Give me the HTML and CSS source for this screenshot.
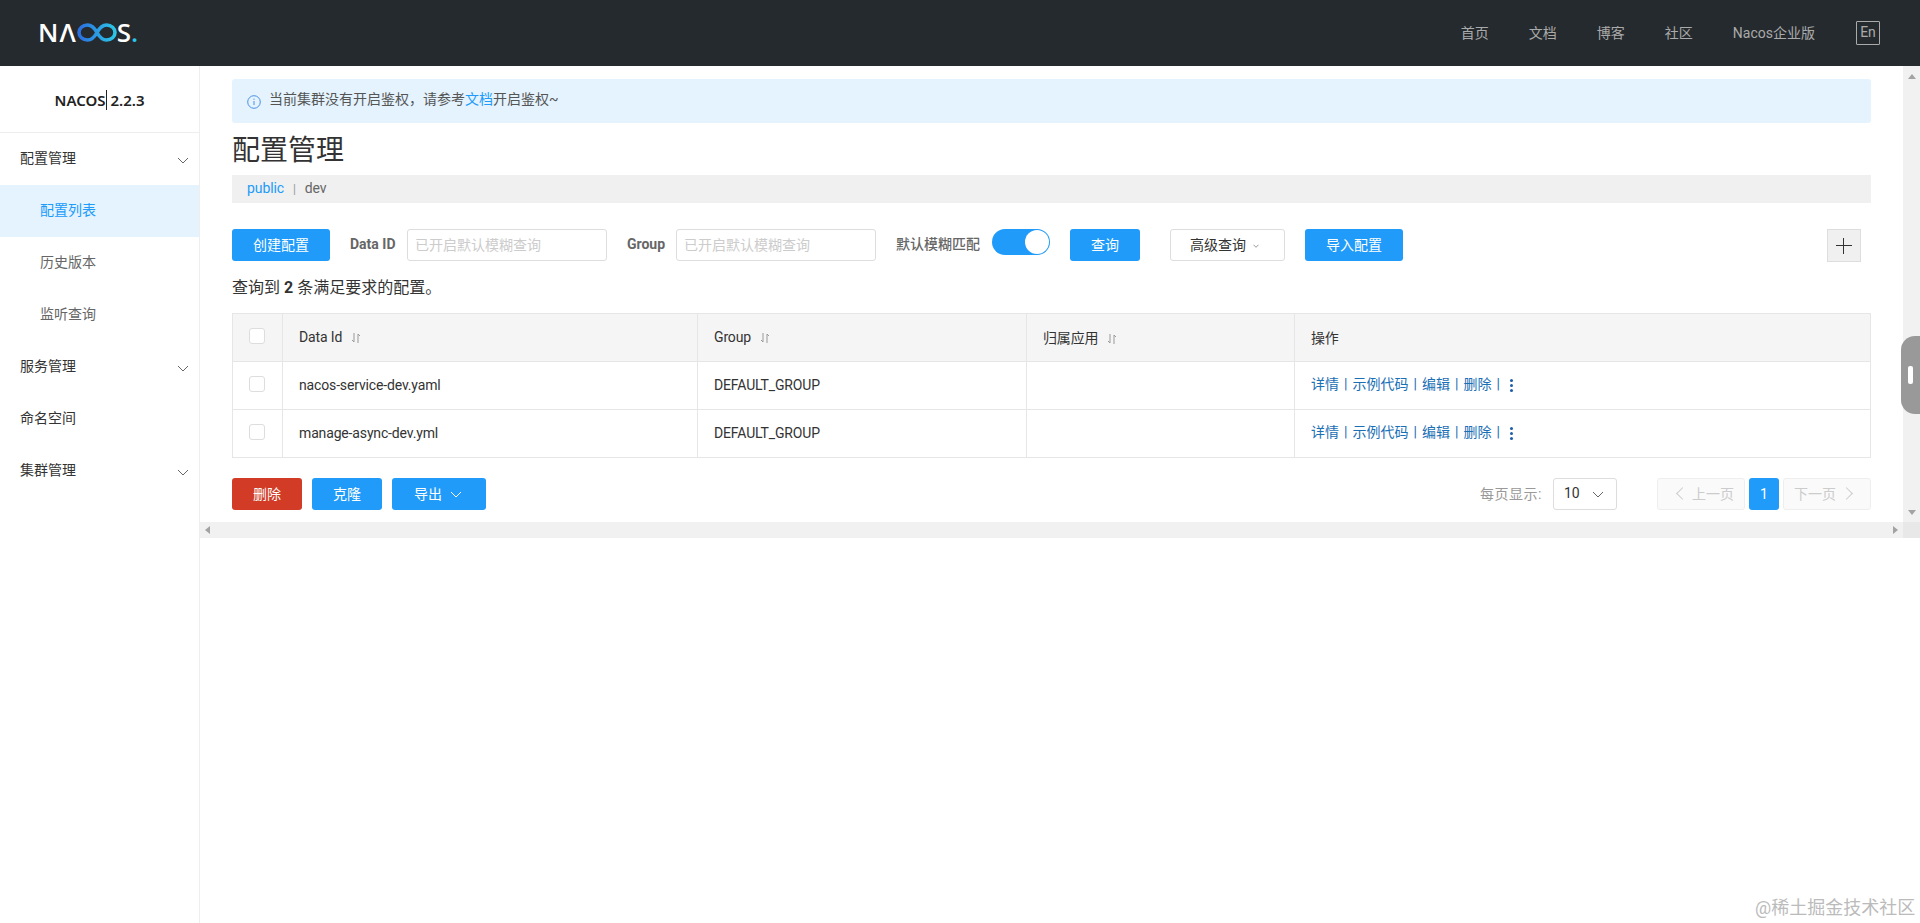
FILE: index.html
```html
<!DOCTYPE html>
<html lang="zh-CN">
<head>
    <meta charset="UTF-8">
    <title>Nacos</title>
    <link rel="stylesheet" href="styles.css">
</head>
<body>

<svg class="defs" width="0" height="0">
    <defs>
        <symbol id="chev" viewBox="0 0 12 7">
            <path d="M1 1l5 5 5-5" fill="none" stroke="currentColor" stroke-width="1"/>
        </symbol>
        <symbol id="sort" viewBox="0 0 8 10">
            <path d="M2 0v9M2 9L0 7M6 10V1M6 1l2 2" fill="none" stroke="#999" stroke-width="1"/>
        </symbol>
        <linearGradient id="logoGrad" x1="0" y1="0" x2="1" y2="0">
            <stop offset="0" stop-color="#2b6fe0"/>
            <stop offset="1" stop-color="#2cc6e6"/>
        </linearGradient>
    </defs>
</svg>

<header class="topbar">
    <div class="logo">
        <span class="logo-n">N</span><span class="logo-a">Λ</span>
        <svg class="logo-mark" width="40" height="19" viewBox="0 0 40 19">
            <path d="M20 9.500C17.500 5 14.500 2 10.500 2 5.500 2 2 5.500 2 9.500S5.500 17 10.500 17c4 0 7-3 9.500-7.500S25.500 2 29.500 2c5 0 8.500 3.500 8.500 7.500S34.500 17 29.500 17c-4 0-7-3-9.500-7.500z" fill="none" stroke="url(#logoGrad)" stroke-width="3.600"/>
        </svg>
        <span>S</span><span class="logo-dot">.</span>
    </div>
    <nav class="topnav">
        <a>首页</a>
        <a>文档</a>
        <a>博客</a>
        <a>社区</a>
        <a>Nacos企业版</a>
        <span class="lang">En</span>
    </nav>
</header>

<div class="layout">
    <aside class="sidebar">
        <div class="version"><span class="version-name">NACOS</span> 2.2.3</div>
        <div class="menu-group">配置管理<svg class="chev"><use href="#chev"/></svg></div>
        <div class="menu-item active">配置列表</div>
        <div class="menu-item">历史版本</div>
        <div class="menu-item">监听查询</div>
        <div class="menu-group">服务管理<svg class="chev"><use href="#chev"/></svg></div>
        <div class="menu-group">命名空间</div>
        <div class="menu-group">集群管理<svg class="chev"><use href="#chev"/></svg></div>
    </aside>

    <div class="right">
        <div class="pane">
            <main class="content">
                <div class="notice">
                    <svg class="notice-icon" width="14" height="14" viewBox="0 0 14 14">
                        <circle cx="7" cy="7" r="6.300" fill="none" stroke="#4a90e2" stroke-width="1"/>
                        <path d="M7 6v4M7 3.600v1.200" stroke="#4a90e2" stroke-width="1"/>
                    </svg>
                    <span>当前集群没有开启鉴权，请参考<a class="blue">文档</a>开启鉴权~</span>
                </div>
                <h1>配置管理</h1>
                <div class="crumbs"><a class="blue">public</a><i>|</i><span>dev</span></div>

                <div class="toolbar">
                    <button class="btn w98">创建配置</button>
                    <label class="lbl lbl-id">Data ID</label>
                    <input class="field" placeholder="已开启默认模糊查询">
                    <label class="lbl lbl-group">Group</label>
                    <input class="field" placeholder="已开启默认模糊查询">
                    <label class="lbl lbl-fuzzy">默认模糊匹配</label>
                    <span class="switch"><span class="knob"></span></span>
                    <button class="btn w70 gap20">查询</button>
                    <button class="btn-plain gap30">高级查询<svg class="chev-small"><use href="#chev"/></svg></button>
                    <button class="btn w98 gap20">导入配置</button>
                    <button class="plus"></button>
                </div>

                <p class="summary">查询到 <strong>2</strong> 条满足要求的配置。</p>

                <table class="grid">
                    <colgroup>
                        <col class="c-check"><col class="c-id"><col class="c-group"><col class="c-app"><col>
                    </colgroup>
                    <thead>
                        <tr>
                            <th class="check"><span class="box"></span></th>
                            <th>Data Id<svg class="sort"><use href="#sort"/></svg></th>
                            <th>Group<svg class="sort"><use href="#sort"/></svg></th>
                            <th>归属应用<svg class="sort"><use href="#sort"/></svg></th>
                            <th>操作</th>
                        </tr>
                    </thead>
                    <tbody>
                        <tr>
                            <td class="check"><span class="box"></span></td>
                            <td>nacos-service-dev.yaml</td>
                            <td>DEFAULT_GROUP</td>
                            <td></td>
                            <td class="ops"><a>详情</a><i>|</i><a>示例代码</a><i>|</i><a>编辑</a><i>|</i><a>删除</a><i>|</i><b class="dots"></b></td>
                        </tr>
                        <tr>
                            <td class="check"><span class="box"></span></td>
                            <td>manage-async-dev.yml</td>
                            <td>DEFAULT_GROUP</td>
                            <td></td>
                            <td class="ops"><a>详情</a><i>|</i><a>示例代码</a><i>|</i><a>编辑</a><i>|</i><a>删除</a><i>|</i><b class="dots"></b></td>
                        </tr>
                    </tbody>
                </table>

                <div class="footer-row">
                    <button class="btn red w70">删除</button>
                    <button class="btn w70 gap10">克隆</button>
                    <button class="btn w94 gap10 export">导出<svg class="chev-btn"><use href="#chev"/></svg></button>
                    <div class="pager">
                        <span class="page-label">每页显示:</span>
                        <span class="page-size">10<svg class="chev"><use href="#chev"/></svg></span>
                        <span class="page-btn prev"><em class="arrow-l"></em>上一页</span>
                        <span class="page-num">1</span>
                        <span class="page-btn next">下一页<em class="arrow-r"></em></span>
                    </div>
                </div>
            </main>
            <div class="vbar">
                <span class="tri-up"></span>
                <span class="tri-down"></span>
            </div>
        </div>
        <div class="hbar">
            <span class="tri-left"></span>
            <span class="tri-right"></span>
            <span class="corner"></span>
        </div>
    </div>
</div>

<!-- floating handle at the window edge -->
<div class="handle"><span></span></div>
<div class="watermark">@稀土掘金技术社区</div>

</body>
</html>
```

FILE: styles.css
```css
* { box-sizing: border-box; }
html, body { height: 100%; }
body {
    margin: 0;
    overflow: hidden;
    background: #fff;
    color: #333;
    font-family: Roboto, "Noto Sans CJK SC", sans-serif;
    font-size: 14px;
}
.defs { position: absolute; }
a { text-decoration: none; }
i { font-style: normal; }
.blue { color: #209bfa; }

/* top bar */
.topbar {
    height: 66px;
    background: #252a2f;
    display: flex;
    align-items: center;
    justify-content: space-between;
    padding: 0 40px;
}
.logo {
    display: flex;
    align-items: center;
    margin-bottom: 2px;
    color: #fff;
    font-family: "Open Sans", sans-serif;
    font-size: 26px;
    font-weight: 600;
    line-height: 26px;
}
.logo-n { margin-left: -2px; }
.logo-a { margin-left: 1px; }
.logo-mark { margin: 1px 0 0 1px; }
.logo-dot { color: #2cc6e6; }
.topnav {
    display: flex;
    align-items: center;
    color: #aaa;
    gap: 40px;
    padding-bottom: 2px;
}
.lang {
    width: 24px;
    height: 24px;
    margin-left: 1px;
    margin-bottom: -1px;
    border: 1px solid #aaa;
    border-radius: 1px;
    line-height: 20px;
    text-align: center;
}

.layout { display: flex; height: 857px; }

/* sidebar */
.sidebar {
    width: 200px;
    flex: none;
    border-right: 1px solid #eee;
}
.version {
    height: 67px;
    border-bottom: 1px solid #eee;
    line-height: 68px;
    text-align: center;
    color: #222;
    font-family: "Noto Sans", sans-serif;
    font-size: 15px;
    font-weight: 600;
}
.version-name { border-right: 1px solid #222; }
.menu-group, .menu-item {
    height: 52px;
    line-height: 50px;
    position: relative;
}
.menu-group { padding-left: 20px; color: #333; }
.menu-item { padding-left: 40px; color: #666; }
.menu-item.active { background: #e4f3fe; color: #209bfa; }
.chev {
    position: absolute;
    right: 10px;
    top: 24px;
    width: 12px;
    height: 7px;
    color: #666;
}

/* right column */
.right { flex: 1; min-width: 0; }
.pane { display: flex; height: 456px; }
.content { flex: 1; min-width: 0; padding: 13px 32px 0; }
.vbar {
    width: 17px;
    flex: none;
    background: #f1f1f1;
    display: flex;
    flex-direction: column;
    justify-content: space-between;
    align-items: center;
    padding: 8px 0 7px;
}
.tri-up { border: 4px solid transparent; border-top: 0; border-bottom: 5px solid #a3a3a3; }
.tri-down { border: 4px solid transparent; border-bottom: 0; border-top: 5px solid #a3a3a3; }
.hbar {
    height: 16px;
    background: #f1f1f1;
    display: flex;
    align-items: center;
    padding-left: 5px;
}
.tri-left { border: 4px solid transparent; border-left: 0; border-right: 5px solid #a3a3a3; }
.tri-right { border: 4px solid transparent; border-right: 0; border-left: 5px solid #a3a3a3; margin-left: auto; margin-right: 5px; }
.corner { width: 17px; height: 16px; background: #e8e8e8; }

.notice {
    height: 44px;
    background: #e4f3fe;
    border-radius: 3px;
    display: flex;
    align-items: center;
    padding-left: 15px;
}
.notice-icon { margin-right: 8px; margin-top: 1px; flex: none; }
.notice span { color: #555; margin-bottom: 7px; }
h1 {
    margin: 0;
    height: 52px;
    line-height: 56px;
    font-size: 28px;
    font-weight: 400;
    color: #333;
}
.crumbs {
    height: 28px;
    line-height: 26px;
    background: #f0f0f0;
    padding-left: 15px;
    color: #666;
    letter-spacing: -0.1px;
}
.crumbs i { margin: 0 9px; color: #999; font-size: 12px; }

/* toolbar */
.toolbar { display: flex; align-items: flex-start; margin-top: 26px; height: 32px; }
.btn, .btn-plain {
    height: 32px;
    padding: 0 0 2px;
    border: 0;
    border-radius: 3px;
    background: #209bfa;
    color: #fff;
    font: inherit;
    display: block;
}
.btn-plain {
    width: 115px;
    padding-right: 6px;
    background: #fff;
    border: 1px solid #ddd;
    color: #333;
}
.red { background: #d23c26; }
.w98 { width: 98px; }
.w94 { width: 94px; }
.w70 { width: 70px; }
.gap10 { margin-left: 10px; }
.gap20 { margin-left: 20px; }
.gap30 { margin-left: 30px; }
.lbl {
    flex: none;
    line-height: 30px;
    font-weight: 700;
    color: #666;
    white-space: nowrap;
}
.lbl-id { width: 57px; margin-left: 20px; }
.lbl-group { width: 49px; margin-left: 20px; }
.lbl-fuzzy { width: 96px; margin-left: 20px; font-weight: 500; }
.field {
    flex: none;
    width: 200px;
    height: 32px;
    border: 1px solid #ddd;
    border-radius: 3px;
    padding: 0 7px;
    font: inherit;
    outline: 0;
}
.field::placeholder { color: #ccc; }
.switch {
    flex: none;
    width: 58px;
    height: 26px;
    border-radius: 13px;
    background: #209bfa;
    display: flex;
    justify-content: flex-end;
    padding: 1px 1px 1px 0;
}
.knob { width: 24px; height: 24px; border-radius: 50%; background: #fff; }
.chev-small { width: 6px; height: 4px; margin-left: 7px; vertical-align: 2px; color: #333; }
.chev-btn { width: 12px; height: 7px; margin-left: 8px; vertical-align: 1px; color: #fff; }
.export { padding-right: 2px; }
.plus {
    width: 34px;
    height: 33px;
    margin-left: auto;
    margin-right: 10px;
    border: 1px solid #ddd;
    background: #f0f0f0 linear-gradient(#333, #333) center / 16px 1px no-repeat;
    position: relative;
    padding: 0;
}
.plus::after {
    content: "";
    position: absolute;
    left: 15px;
    top: 8px;
    width: 1px;
    height: 16px;
    background: #333;
}

.summary {
    margin: 0;
    height: 52px;
    line-height: 54px;
    font-size: 16px;
}

/* table */
.grid {
    width: 100%;
    table-layout: fixed;
    border-collapse: collapse;
    color: #333;
}
.c-check { width: 50px; }
.c-id { width: 415px; }
.c-group { width: 329px; }
.c-app { width: 268px; }
.grid th, .grid td {
    height: 48px;
    padding: 0 16px 2px;
    border: 1px solid #e6e6e6;
    text-align: left;
    font-weight: 400;
    letter-spacing: -0.15px;
}
.grid th { background: #f5f5f5; }
.grid .check { padding: 0 0 0 16px; }
.box {
    display: block;
    width: 16px;
    height: 16px;
    margin-top: -4px;
    border: 1px solid #ddd;
    border-radius: 3px;
    background: #fff;
}
.sort { width: 8px; height: 10px; margin-left: 10px; vertical-align: -1px; }
.grid .ops { padding-bottom: 5px; color: #1a6fb5; letter-spacing: 0; }
.ops i { display: inline-block; width: 13.5px; text-align: center; color: #1a6fb5; }
.dots {
    display: inline-block;
    width: 3px;
    height: 3px;
    margin-left: 5px;
    vertical-align: 2px;
    border-radius: 50%;
    background: #1f5fa8;
    box-shadow: 0 -5px 0 #1f5fa8, 0 5px 0 #1f5fa8;
}

/* bottom row */
.footer-row { display: flex; margin-top: 20px; height: 32px; }
.pager { margin-left: auto; display: flex; align-items: center; color: #999; }
.page-label { margin-right: 11px; padding-bottom: 2px; letter-spacing: 0.5px; }
.page-size {
    width: 64px;
    height: 32px;
    border: 1px solid #ddd;
    border-radius: 3px;
    line-height: 28px;
    padding-left: 10px;
    color: #333;
    position: relative;
    margin-right: 40px;
}
.page-size .chev { right: 12px; top: 12px; }
.page-btn {
    display: flex;
    align-items: center;
    width: 88px;
    height: 32px;
    padding-bottom: 2px;
    border: 1px solid #eee;
    border-radius: 3px;
    background: #fafafa;
    color: #ccc;
}
.prev { padding-left: 20px; }
.next { padding-left: 10px; }
.page-num {
    width: 30px;
    height: 32px;
    margin: 0 4px;
    border-radius: 3px;
    background: #209bfa;
    color: #fff;
    line-height: 32px;
    text-align: center;
}
.arrow-l, .arrow-r {
    display: block;
    flex: none;
    width: 9px;
    height: 9px;
    border-left: 1px solid #ccc;
    border-bottom: 1px solid #ccc;
    transform: rotate(45deg);
    margin-right: 5px;
}
.arrow-r { transform: rotate(-135deg); margin: 0 0 0 6px; }

/* overlays */
.handle {
    position: absolute;
    left: 1901px;
    top: 336px;
    width: 19px;
    height: 78px;
    background: #999;
    border-radius: 14px 0 0 14px;
}
.handle span {
    position: absolute;
    left: 7px;
    top: 30px;
    width: 5px;
    height: 18px;
    border-radius: 2px;
    background: #fff;
}
.watermark {
    position: absolute;
    left: 1755px;
    top: 895px;
    font-size: 18px;
    line-height: 26px;
    color: #bbb;
    white-space: nowrap;
}
```
